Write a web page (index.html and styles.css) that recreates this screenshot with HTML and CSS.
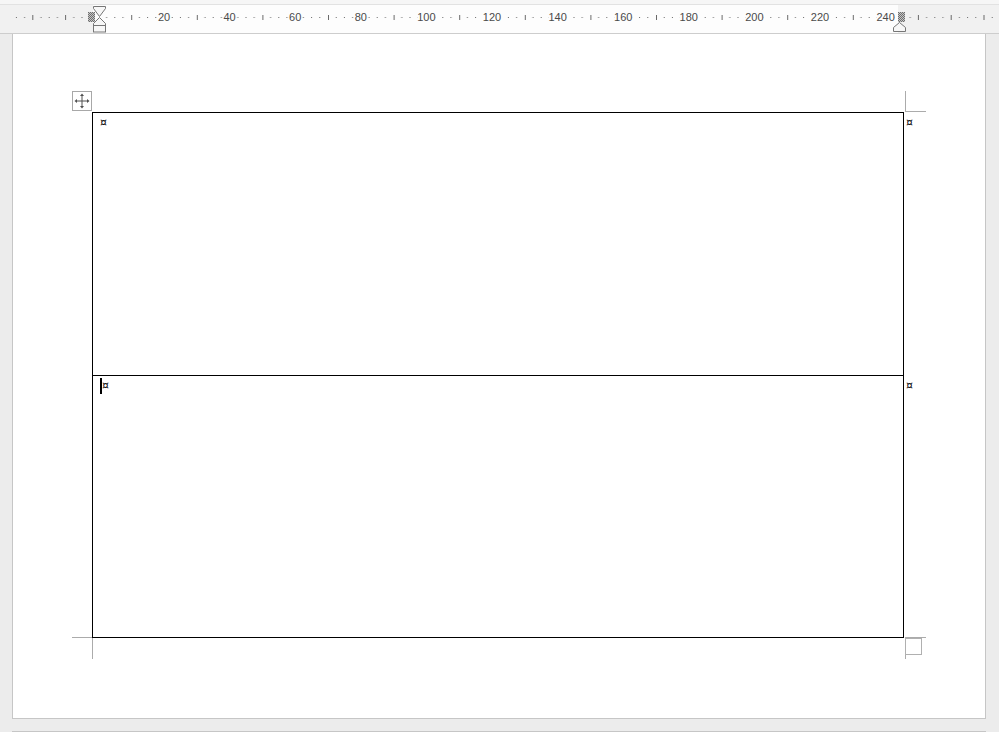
FILE: index.html
```html
<!DOCTYPE html>
<html>
<head>
<meta charset="utf-8">
<link rel="stylesheet" href="styles.css">
</head>
<body>
<svg class="ruler" width="999" height="34" viewBox="0 0 999 34">
  <defs>
    <pattern id="dots" patternUnits="userSpaceOnUse" x="0" y="0" width="32.8" height="34">
      <rect x="7.7" y="17" width="1" height="1" fill="#6a6a6a"/>
      <rect x="15.9" y="17" width="1" height="1" fill="#6a6a6a"/>
      <rect x="24.1" y="17" width="1" height="1" fill="#6a6a6a"/>
    </pattern>
    <pattern id="bars" patternUnits="userSpaceOnUse" x="0" y="0" width="65.6" height="34">
      <rect x="0" y="15" width="1" height="5" fill="#6a6a6a"/>
    </pattern>
    <pattern id="hatch" patternUnits="userSpaceOnUse" x="0" y="0" width="2" height="2">
      <rect x="0" y="0" width="2" height="2" fill="#c4c4c4"/>
      <rect x="0" y="0" width="1" height="1" fill="#6e6e6e"/>
      <rect x="1" y="1" width="1" height="1" fill="#6e6e6e"/>
    </pattern>
  </defs>
  <rect x="0" y="0" width="999" height="5" fill="#f6f6f6"/>
  <rect x="0" y="4" width="999" height="1" fill="#e2e2e2"/>
  <rect x="0" y="5" width="999" height="28" fill="#f1f1f1"/>
  <rect x="93" y="5" width="805" height="28" fill="#fdfdfd"/>
  <rect x="0" y="33" width="999" height="1" fill="#cdcdcd"/>
  <rect x="14" y="10" width="985" height="16" fill="url(#dots)"/>
  <rect x="99" y="10" width="800" height="16" fill="url(#bars)"/>
  <rect x="32.3" y="15" width="1" height="5" fill="#6a6a6a"/>
  <rect x="65.1" y="15" width="1" height="5" fill="#6a6a6a"/>
  <rect x="917.9" y="15" width="1" height="5" fill="#6a6a6a"/>
  <rect x="950.7" y="15" width="1" height="5" fill="#6a6a6a"/>
  <rect x="983.5" y="15" width="1" height="5" fill="#6a6a6a"/>
  <g class="ruler-labels">
    <rect x="158" y="12" width="12" height="11" fill="#fdfdfd"/>
    <text x="164" y="21">20</text>
    <rect x="223.6" y="12" width="12" height="11" fill="#fdfdfd"/>
    <text x="229.6" y="21">40</text>
    <rect x="289.2" y="12" width="12" height="11" fill="#fdfdfd"/>
    <text x="295.2" y="21">60</text>
    <rect x="354.8" y="12" width="12" height="11" fill="#fdfdfd"/>
    <text x="360.8" y="21">80</text>
    <rect x="417.4" y="12" width="18" height="11" fill="#fdfdfd"/>
    <text x="426.4" y="21">100</text>
    <rect x="483" y="12" width="18" height="11" fill="#fdfdfd"/>
    <text x="492" y="21">120</text>
    <rect x="548.6" y="12" width="18" height="11" fill="#fdfdfd"/>
    <text x="557.6" y="21">140</text>
    <rect x="614.2" y="12" width="18" height="11" fill="#fdfdfd"/>
    <text x="623.2" y="21">160</text>
    <rect x="679.8" y="12" width="18" height="11" fill="#fdfdfd"/>
    <text x="688.8" y="21">180</text>
    <rect x="745.4" y="12" width="18" height="11" fill="#fdfdfd"/>
    <text x="754.4" y="21">200</text>
    <rect x="811" y="12" width="18" height="11" fill="#fdfdfd"/>
    <text x="820" y="21">220</text>
    <rect x="876.6" y="12" width="18" height="11" fill="#fdfdfd"/>
    <text x="885.6" y="21">240</text>
  </g>
  <!-- left indent markers -->
  <rect x="88" y="12" width="7" height="10" fill="url(#hatch)"/>
  <polygon points="93.5,6.5 105.5,6.5 105.5,8.5 99.5,16.5 93.5,8.5" fill="#f7f7f7" stroke="#767676" stroke-width="1"/>
  <polygon points="99.5,17.5 105.5,23.5 105.5,25.5 93.5,25.5 93.5,23.5" fill="#f7f7f7" stroke="#767676" stroke-width="1"/>
  <rect x="93.5" y="25.5" width="12" height="6.5" fill="#f7f7f7" stroke="#767676" stroke-width="1"/>
  <!-- right markers -->
  <rect x="898" y="12" width="7" height="10" fill="url(#hatch)"/>
  <polygon points="893.5,31.5 893.5,27.5 899.5,22.5 905.5,27.5 905.5,31.5" fill="#f7f7f7" stroke="#767676" stroke-width="1"/>
</svg>

<div class="page">
  <div class="table">
    <div class="row row-first">
      <span class="mark">¤</span>
      <span class="eor">¤</span>
    </div>
    <div class="row row-second">
      <span class="caret"></span>
      <span class="mark">¤</span>
      <span class="eor">¤</span>
    </div>

    <div class="move-handle">
      <svg width="18" height="18" viewBox="0 0 18 18">
        <path d="M9 3.5V14.5M3.5 9H14.5" stroke="#505050" stroke-width="1" fill="none"/>
        <path d="M9 1.5L11 4H7Z M9 16.5L11 14H7Z M1.5 9L4 7V11Z M16.5 9L14 7V11Z" fill="#505050"/>
      </svg>
    </div>

    <div class="crop crop-tr-v"></div>
    <div class="crop crop-tr-h"></div>
    <div class="crop crop-bl-h"></div>
    <div class="crop crop-bl-v"></div>
    <div class="crop crop-br-h"></div>
    <div class="crop crop-br-v"></div>
    <div class="resize-handle"></div>
  </div>
</div>
<div class="page page-next"></div>
</body>
</html>
```

FILE: styles.css
```css
html, body {
  margin: 0;
  padding: 0;
}

body {
  background: #ececec;
  width: 999px;
  height: 732px;
  overflow: hidden;
  font-family: "Liberation Sans", Arial, sans-serif;
}

.ruler {
  display: block;
}

.ruler-labels text {
  font-family: "Liberation Sans", Arial, sans-serif;
  font-size: 11px;
  fill: #4a4a4a;
  text-anchor: middle;
}

.page {
  margin-left: 12px;
  width: 974px;
  height: 685px;
  box-sizing: border-box;
  background: #ffffff;
  border: 1px solid #c6c6c6;
  border-top: 0;
  padding: 78px 0 0 79px;
}

.page-next {
  margin-top: 12px;
  height: 20px;
  border-top: 1px solid #c6c6c6;
  border-bottom: 0;
  padding: 0;
}

.table {
  position: relative;
  width: 812px;
  height: 526px;
  box-sizing: border-box;
  border: 1px solid #000;
  display: flex;
  flex-direction: column;
}

.row {
  position: relative;
  box-sizing: border-box;
  padding: 3px 0 0 7px;
  font-family: "DejaVu Sans", sans-serif;
  font-size: 11px;
  line-height: 14px;
  color: #000;
}

.row-first {
  height: 262px;
}

.row-second {
  flex: 1;
  border-top: 1px solid #000;
}

.row-second .mark {
  margin-left: 2px;
}

.mark {
  display: inline-block;
}

.eor {
  position: absolute;
  right: -10px;
  top: 3px;
}

.caret {
  position: absolute;
  left: 7px;
  top: 2px;
  width: 2px;
  height: 16px;
  background: #000;
}

.move-handle {
  position: absolute;
  left: -21px;
  top: -22px;
  width: 20px;
  height: 20px;
  box-sizing: border-box;
  border: 1px solid #a8a8a8;
  background: #fff;
  display: flex;
  align-items: center;
  justify-content: center;
}

.move-handle svg {
  display: block;
}

.crop {
  position: absolute;
  background: #ababab;
}

.crop-tr-v {
  left: 812px;
  top: -22px;
  width: 1px;
  height: 21px;
}

.crop-tr-h {
  left: 812px;
  top: -2px;
  width: 21px;
  height: 1px;
}

.crop-bl-h {
  left: -21px;
  top: 524px;
  width: 20px;
  height: 1px;
}

.crop-bl-v {
  left: -1px;
  top: 525px;
  width: 1px;
  height: 21px;
}

.crop-br-h {
  left: 812px;
  top: 524px;
  width: 21px;
  height: 1px;
}

.crop-br-v {
  left: 812px;
  top: 525px;
  width: 1px;
  height: 21px;
}

.resize-handle {
  position: absolute;
  left: 812px;
  top: 525px;
  width: 17px;
  height: 17px;
  box-sizing: border-box;
  border: 1px solid #b0b0b0;
  background: #fff;
}
```
